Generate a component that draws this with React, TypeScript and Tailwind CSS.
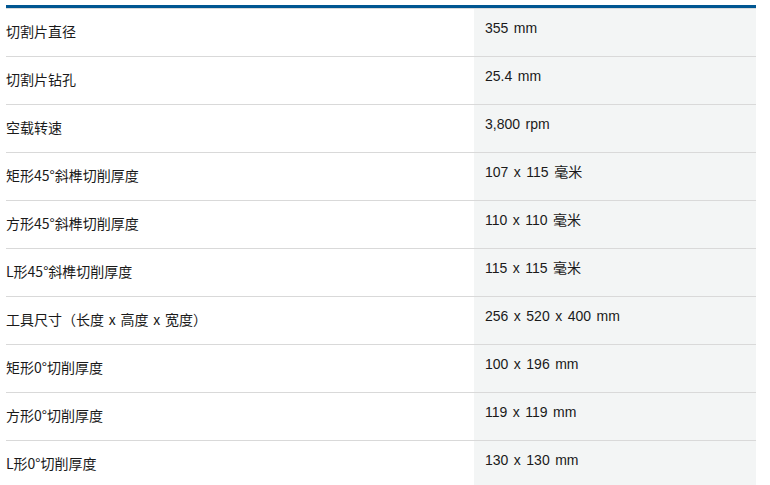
import React from 'react';

const specs: [string, string][] = [
  ['切割片直径', '355 mm'],
  ['切割片钻孔', '25.4 mm'],
  ['空载转速', '3,800 rpm'],
  ['矩形45°斜榫切削厚度', '107 x 115 毫米'],
  ['方形45°斜榫切削厚度', '110 x 110 毫米'],
  ['L形45°斜榫切削厚度', '115 x 115 毫米'],
  ['工具尺寸（长度 x 高度 x 宽度）', '256 x 520 x 400 mm'],
  ['矩形0°切削厚度', '100 x 196 mm'],
  ['方形0°切削厚度', '119 x 119 mm'],
  ['L形0°切削厚度', '130 x 130 mm'],
];

export default function App() {
  return (
    <div className="bg-white w-[770px] h-[485px] overflow-hidden pt-[5px] pl-[6px]">
      <div className="w-[750px] [word-spacing:1.6px]">
        <div className="h-[3px] bg-[#005691]" />
        {specs.map(([label, value]) => (
          <div key={label} className="flex h-[48px] border-t border-[#d9d9d9]">
            <div className="w-[468px] flex items-center pb-[2px] text-[14px] text-[#1a1a1a] font-['Noto_Sans_CJK_SC',sans-serif]">
              {label}
            </div>
            <div className="flex-1 bg-[#f3f5f5] pl-[11px] pt-[9px] text-[14px] leading-[21px] text-[#1a1a1a] font-['Liberation_Sans','Noto_Sans_CJK_SC',sans-serif]">
              {value}
            </div>
          </div>
        ))}
      </div>
    </div>
  );
}
